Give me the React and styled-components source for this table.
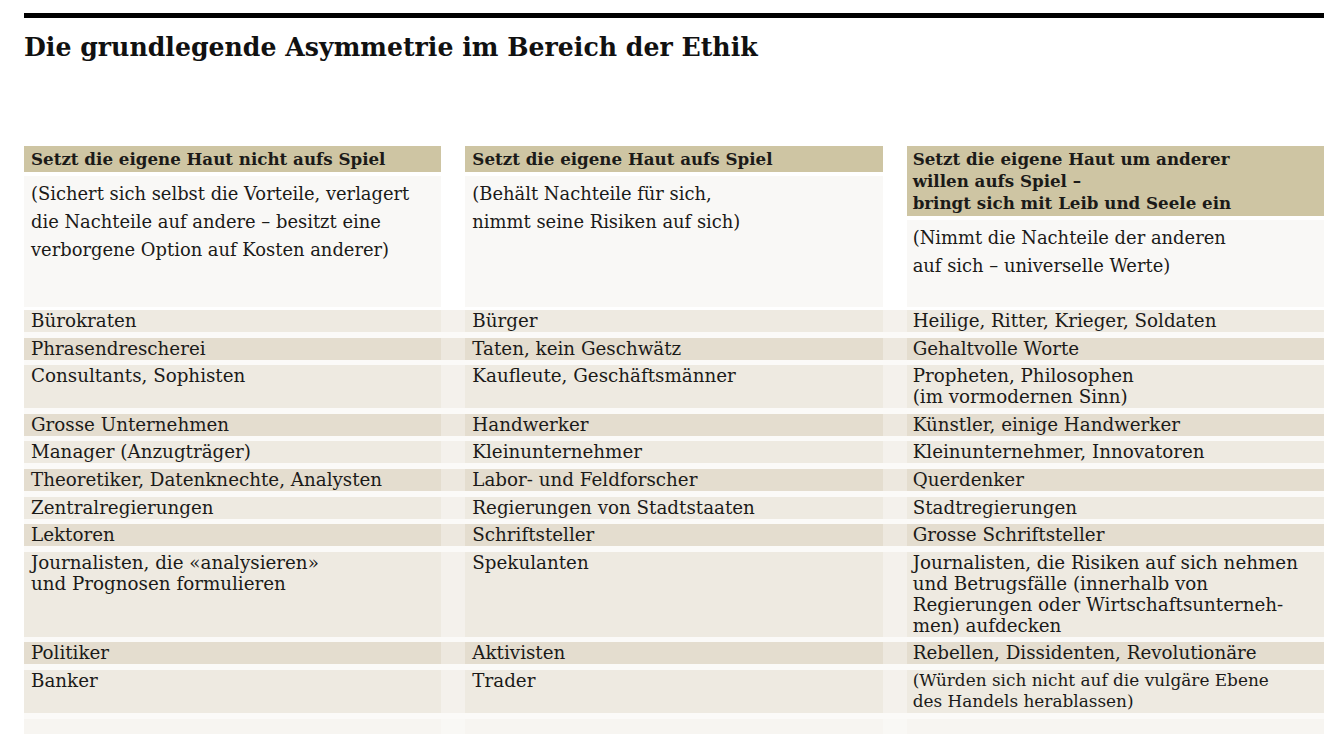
import React from "react";
import styled, { createGlobalStyle } from "styled-components";

const GlobalStyle = createGlobalStyle`
  html, body {
    margin: 0;
    padding: 0;
    background: #ffffff;
  }
  body {
    font-family: "DejaVu Serif", "Liberation Serif", serif;
    color: #1b1a18;
  }
`;

const columns = [
  {
    head: "Setzt die eigene Haut nicht aufs Spiel",
    intro: "(Sichert sich selbst die Vorteile, verlagert\ndie Nachteile auf andere – besitzt eine\nverborgene Option auf Kosten anderer)",
  },
  {
    head: "Setzt die eigene Haut aufs Spiel",
    intro: "(Behält Nachteile für sich,\nnimmt seine Risiken auf sich)",
  },
  {
    head: "Setzt die eigene Haut um anderer\nwillen aufs Spiel –\nbringt sich mit Leib und Seele ein",
    intro: "(Nimmt die Nachteile der anderen\nauf sich – universelle Werte)",
  },
];

const rows = [
  ["Bürokraten", "Bürger", "Heilige, Ritter, Krieger, Soldaten"],
  ["Phrasendrescherei", "Taten, kein Geschwätz", "Gehaltvolle Worte"],
  ["Consultants, Sophisten", "Kaufleute, Geschäftsmänner", "Propheten, Philosophen\n(im vormodernen Sinn)"],
  ["Grosse Unternehmen", "Handwerker", "Künstler, einige Handwerker"],
  ["Manager (Anzugträger)", "Kleinunternehmer", "Kleinunternehmer, Innovatoren"],
  ["Theoretiker, Datenknechte, Analysten", "Labor- und Feldforscher", "Querdenker"],
  ["Zentralregierungen", "Regierungen von Stadtstaaten", "Stadtregierungen"],
  ["Lektoren", "Schriftsteller", "Grosse Schriftsteller"],
  [
    "Journalisten, die «analysieren»\nund Prognosen formulieren",
    "Spekulanten",
    "Journalisten, die Risiken auf sich nehmen\nund Betrugsfälle (innerhalb von\nRegierungen oder Wirtschaftsunterneh-\nmen) aufdecken",
  ],
  ["Politiker", "Aktivisten", "Rebellen, Dissidenten, Revolutionäre"],
  ["Banker", "Trader", "(Würden sich nicht auf die vulgäre Ebene\ndes Handels herablassen)"],
];

const tones = {
  light: { cell: "#eeeae1", gutter: "#f4f1ec" },
  dark: { cell: "#e4ddcf", gutter: "#ede8df" },
  pale: { cell: "#f7f5f1", gutter: "#f9f8f5" },
};

const Page = styled.div`
  width: 1300px;
  padding: 13px 0 0 24px;
`;

const Rule = styled.div`
  height: 5px;
  background: #000;
`;

const Title = styled.h1`
  margin: 12px 0 0;
  font-size: 25.2px;
  line-height: 34px;
  font-weight: bold;
  color: #111;
`;

const Grid = styled.div`
  display: grid;
  grid-template-columns: 1fr 24px 1fr 24px 1fr;
`;

const HeadGrid = styled(Grid)`
  margin-top: 82px;
  min-height: 161px;
`;

const HeadColumn = styled.div`
  display: flex;
  flex-direction: column;
  gap: 4px;
`;

const Heading = styled.div`
  background: #cec5a3;
  padding: 2px 7px 2px ${(p) => (p.$last ? 6 : 7)}px;
  font-size: 16.7px;
  line-height: 22px;
  font-weight: bold;
  white-space: pre;
`;

const Intro = styled.div`
  flex: 1;
  background: #f9f8f6;
  padding: 4px 7px 0 ${(p) => (p.$last ? 6 : 7)}px;
  font-size: 17.9px;
  line-height: 28px;
  white-space: pre;
`;

const Body = styled.div`
  margin-top: 3px;
  display: flex;
  flex-direction: column;
  gap: 5.6px;
  background: #fbfaf8;
`;

const Row = styled(Grid)`
  min-height: ${(p) => p.$minHeight || 0}px;
`;

const Cell = styled.div`
  background: ${(p) => tones[p.$tone].cell};
  padding: 0 7px 1px ${(p) => (p.$last ? 6 : 7)}px;
  font-size: ${(p) => (p.$small ? "16.9px" : "18.3px")};
  line-height: 21px;
  white-space: pre;
`;

const Gutter = styled.div`
  background: ${(p) => tones[p.$tone].gutter};
`;

export default function App() {
  return (
    <>
      <GlobalStyle />
      <Page>
        <Rule />
        <Title>Die grundlegende Asymmetrie im Bereich der Ethik</Title>
        <HeadGrid>
          {columns.map((c, i) => (
            <React.Fragment key={c.head}>
              {i > 0 && <div />}
              <HeadColumn>
                <Heading $last={i === 2}>{c.head}</Heading>
                <Intro $last={i === 2}>{c.intro}</Intro>
              </HeadColumn>
            </React.Fragment>
          ))}
        </HeadGrid>
        <Body>
          {rows.map((r, i) => {
            const tone = i % 2 === 0 ? "light" : "dark";
            return (
              <Row key={r[0]}>
                <Cell $tone={tone}>{r[0]}</Cell>
                <Gutter $tone={tone} />
                <Cell $tone={tone}>{r[1]}</Cell>
                <Gutter $tone={tone} />
                <Cell $tone={tone} $last $small={r[2].startsWith("(Würden")}>
                  {r[2]}
                </Cell>
              </Row>
            );
          })}
          <Row $minHeight={30}>
            <Cell $tone="pale" />
            <Gutter $tone="pale" />
            <Cell $tone="pale" />
            <Gutter $tone="pale" />
            <Cell $tone="pale" />
          </Row>
        </Body>
      </Page>
    </>
  );
}
